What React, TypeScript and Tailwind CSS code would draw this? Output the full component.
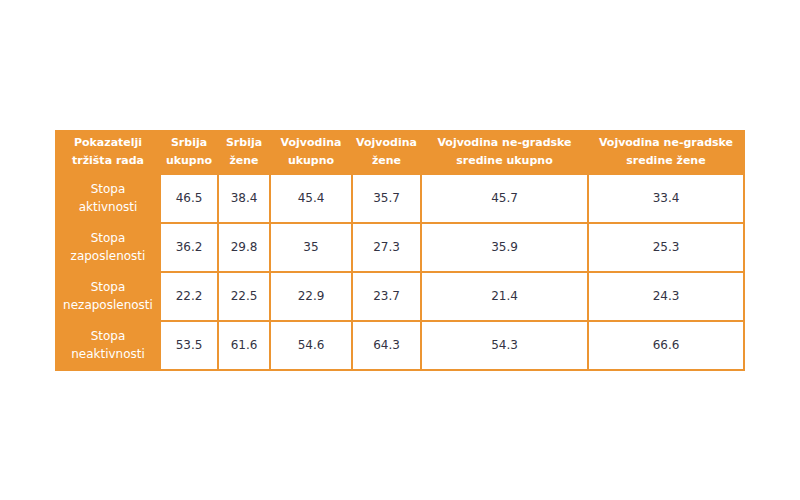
const headers = [
  ['Pokazatelji', 'tržišta rada'],
  ['Srbija', 'ukupno'],
  ['Srbija', 'žene'],
  ['Vojvodina', 'ukupno'],
  ['Vojvodina', 'žene'],
  ['Vojvodina ne-gradske', 'sredine ukupno'],
  ['Vojvodina ne-gradske', 'sredine žene'],
];

const rows = [
  { label: ['Stopa', 'aktivnosti'], values: ['46.5', '38.4', '45.4', '35.7', '45.7', '33.4'] },
  { label: ['Stopa', 'zaposlenosti'], values: ['36.2', '29.8', '35', '27.3', '35.9', '25.3'] },
  { label: ['Stopa', 'nezaposlenosti'], values: ['22.2', '22.5', '22.9', '23.7', '21.4', '24.3'] },
  { label: ['Stopa', 'neaktivnosti'], values: ['53.5', '61.6', '54.6', '64.3', '54.3', '66.6'] },
];

const widths = ['w-[102px]', 'w-[56px]', 'w-[50px]', 'w-[80px]', 'w-[67px]', 'w-[165px]', 'w-[154px]'];

export default function App() {
  return (
    <div className="flex h-[500px] w-[800px] items-center justify-center bg-white font-['DejaVu_Sans',Verdana,sans-serif]">
      <table className="w-[690px] table-fixed border-separate border-spacing-[2px] bg-[#ec9532]">
        <colgroup>
          {widths.map((w, i) => (
            <col key={i} className={w} />
          ))}
        </colgroup>
        <thead>
          <tr className="h-[41px]">
            {headers.map((h, i) => (
              <th key={i} className="p-0 text-center align-middle text-[11px] leading-[18px] font-bold text-white">
                {h[0]}
                <br />
                {h[1]}
              </th>
            ))}
          </tr>
        </thead>
        <tbody>
          {rows.map((row, r) => (
            <tr key={r} className="h-[47px]">
              <td className="p-0 text-center align-middle text-[12px] leading-[18px] text-white">
                {row.label[0]}
                <br />
                {row.label[1]}
              </td>
              {row.values.map((v, i) => (
                <td key={i} className="bg-white p-0 text-center align-middle text-[12px] leading-[18px] text-[#333344]">
                  {v}
                </td>
              ))}
            </tr>
          ))}
        </tbody>
      </table>
    </div>
  );
}
